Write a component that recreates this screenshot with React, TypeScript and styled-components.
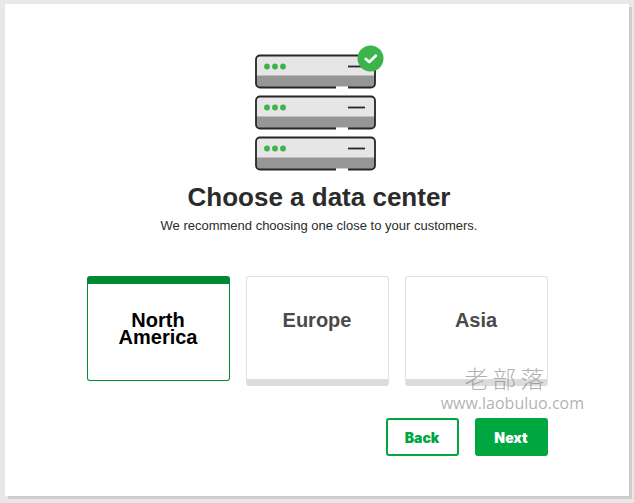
import React, { useState } from "react";
import styled, { createGlobalStyle } from "styled-components";

const GlobalStyle = createGlobalStyle`
  *, *::before, *::after { box-sizing: border-box; }
  body {
    margin: 0;
    background: #e8e8e8;
    font-family: "Liberation Sans", Arial, sans-serif;
    color: #2b2b2b;
  }
`;

const Page = styled.div`
  display: flex;
  min-height: 100vh;
  padding: 4px 5px 7px;
`;

const Panel = styled.main`
  position: relative;
  flex: 1;
  display: flex;
  flex-direction: column;
  align-items: center;
  padding: 41px 16px 40px;
  background: #fff;
  box-shadow: 3px 3px 0 #cdcdcd;
`;

const Header = styled.header`
  display: flex;
  flex-direction: column;
  align-items: center;
  padding-left: 4px;
`;

const Illustration = styled.svg`
  display: block;
  flex: none;
`;

const Title = styled.h1`
  margin: 10px 0 0;
  font-size: 26px;
  line-height: 32px;
  font-weight: 700;
  text-align: center;
`;

const Subtitle = styled.p`
  margin: 5px 0 0;
  font-size: 13px;
  line-height: 16px;
  text-align: center;
`;

const Form = styled.form`
  width: 100%;
  max-width: 461px;
  margin-top: 42px;
`;

const Options = styled.fieldset`
  display: grid;
  grid-template-columns: repeat(3, 1fr);
  align-items: start;
  gap: 16px;
  min-height: 110px;
  margin: 0;
  padding: 0;
  border: 0;
`;

const HiddenRadio = styled.input`
  position: absolute;
  width: 1px;
  height: 1px;
  margin: 0;
  opacity: 0;
`;

const Option = styled.label<{ $selected: boolean }>`
  display: flex;
  justify-content: center;
  min-height: ${(p) => (p.$selected ? 105 : 110)}px;
  padding: ${(p) => (p.$selected ? "28px 24px 16px" : "35px 24px 16px")};
  border: 1px solid ${(p) => (p.$selected ? "#008a32" : "#e0e0e0")};
  border-top: ${(p) => (p.$selected ? "8px solid #008a32" : "1px solid #e0e0e0")};
  border-bottom: ${(p) => (p.$selected ? "1px solid #008a32" : "7px solid #dcdcdc")};
  border-radius: 3px;
  color: ${(p) => (p.$selected ? "#000" : "#4a4a4a")};
  font-size: 20px;
  line-height: 17px;
  font-weight: 700;
  text-align: center;
  cursor: pointer;
`;

const Actions = styled.div`
  display: flex;
  justify-content: flex-end;
  gap: 16px;
  margin-top: 32px;
`;

const Button = styled.button<{ $primary?: boolean }>`
  min-width: 73px;
  height: 38px;
  padding: 0 16px;
  border: 2px solid #00a63f;
  border-radius: 3px;
  background: ${(p) => (p.$primary ? "#00a63f" : "#fff")};
  color: ${(p) => (p.$primary ? "#fff" : "#00a63f")};
  font-family: Inter, sans-serif;
  font-size: 14px;
  font-weight: 900;
  cursor: pointer;
`;

const Watermark = styled.div`
  position: absolute;
  right: 45px;
  bottom: 82px;
  display: flex;
  flex-direction: column;
  align-items: center;
  color: rgba(110, 110, 110, 0.55);
  pointer-events: none;
`;

const WatermarkName = styled.div`
  display: flex;
  gap: 4px;
  padding-right: 16px;
  font-family: "Noto Sans CJK SC", sans-serif;
  font-size: 24px;
  font-weight: 300;
  line-height: 28px;
`;

const WatermarkSite = styled.div`
  font-family: "Open Sans", sans-serif;
  font-size: 16px;
  font-weight: 400;
  line-height: 22px;
`;

function Server({ y }: { y: number }) {
  return (
    <g transform={`translate(0 ${y})`}>
      <rect x="1" y="1" width="119" height="32" rx="4" fill="#e6e6e6" />
      <path d="M1 21H120V29a4 4 0 0 1-4 4H5a4 4 0 0 1-4-4Z" fill="#969696" />
      <rect x="1" y="1" width="119" height="32" rx="4" fill="none" stroke="#262626" strokeWidth="1.8" />
      <rect x="81" y="31.8" width="12" height="3" fill="#fff" />
      {[12, 20, 28].map((cx) => (
        <circle key={cx} cx={cx} cy="12" r="2.9" fill="#3bb54a" />
      ))}
      <path d="M93 12H110" stroke="#262626" strokeWidth="1.8" />
    </g>
  );
}

function ServerStack() {
  return (
    <Illustration width="129" height="126" viewBox="0 0 129 126" aria-hidden="true">
      <Server y={9.5} />
      <Server y={50.5} />
      <Server y={91.5} />
      <circle cx="115.5" cy="13.5" r="13" fill="#3bb54a" />
      <path
        d="M110.8 14L114.3 17L120.8 10.8"
        fill="none"
        stroke="#fff"
        strokeWidth="2.8"
        strokeLinecap="round"
        strokeLinejoin="round"
      />
    </Illustration>
  );
}

const regions = ["North America", "Europe", "Asia"];

export default function App() {
  const [region, setRegion] = useState(regions[0]);

  return (
    <>
      <GlobalStyle />
      <Page>
        <Panel>
          <Header>
            <ServerStack />
            <Title id="region-title">Choose a data center</Title>
            <Subtitle>We recommend choosing one close to your customers.</Subtitle>
          </Header>
          <Form onSubmit={(e) => e.preventDefault()}>
            <Options aria-labelledby="region-title">
              {regions.map((name) => (
                <Option key={name} $selected={region === name}>
                  <HiddenRadio
                    type="radio"
                    name="region"
                    value={name}
                    checked={region === name}
                    onChange={() => setRegion(name)}
                  />
                  <span>{name}</span>
                </Option>
              ))}
            </Options>
            <Actions>
              <Button type="button">Back</Button>
              <Button type="submit" $primary>
                Next
              </Button>
            </Actions>
          </Form>
          <Watermark>
            <WatermarkName>
              <span>老</span>
              <span>部</span>
              <span>落</span>
            </WatermarkName>
            <WatermarkSite>www.laobuluo.com</WatermarkSite>
          </Watermark>
        </Panel>
      </Page>
    </>
  );
}
